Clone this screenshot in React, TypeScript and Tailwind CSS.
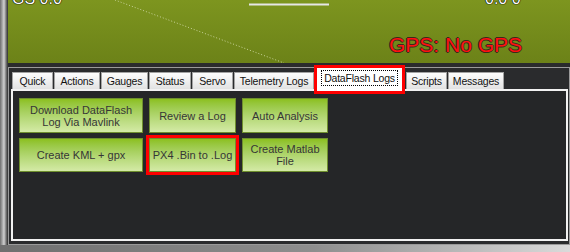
const tabs = [
  { label: "Quick", w: "w-[41px]" },
  { label: "Actions", w: "w-[46px]" },
  { label: "Gauges", w: "w-[47px]" },
  { label: "Status", w: "w-[42px]" },
  { label: "Servo", w: "w-[41px]" },
  { label: "Telemetry Logs", w: "w-[80px]" },
  { label: "DataFlash Logs", w: "w-[85px]", active: true },
  { label: "Scripts", w: "w-[41px]" },
  { label: "Messages", w: "w-[56px]" },
];

const buttons = [
  { label: "Download DataFlash Log Via Mavlink" },
  { label: "Review a Log" },
  { label: "Auto Analysis" },
  { label: "Create KML + gpx" },
  { label: "PX4 .Bin to .Log", marked: true },
  { label: "Create Matlab File" },
];

function Hud() {
  return (
    <div className="relative h-[63px] overflow-hidden bg-linear-to-b from-[#7d951f] to-[#6c8218]">
      <svg className="absolute inset-0" width="562" height="63">
        <line x1="107" y1="0" x2="276" y2="63" stroke="#c9d49a" strokeWidth="1" strokeDasharray="1 2" />
        <line x1="241" y1="4.5" x2="321" y2="4.5" stroke="#e6e6e6" strokeWidth="2" />
      </svg>
      <span className="absolute left-[4px] top-[-13px] text-[16px] text-white [text-shadow:0_0_1px_#000,0_0_1px_#000,0_0_1px_#000]">
        GS 0.0
      </span>
      <span className="absolute left-[477px] top-[-13px] text-[16px] text-white [text-shadow:0_0_1px_#000,0_0_1px_#000,0_0_1px_#000]">
        0.0 0
      </span>
      <span className="absolute left-[381px] top-[29px] text-[21px] text-[#ff1010] [text-shadow:1px_0_0_#3a2a1a,-1px_0_0_#3a2a1a,0_1px_0_#3a2a1a,0_-1px_0_#3a2a1a]">
        GPS: No GPS
      </span>
    </div>
  );
}

function Tab({ label, w, active }: { label: string; w: string; active?: boolean }) {
  if (active) {
    return (
      <div
        className={`${w} relative z-10 -mb-[2px] ml-[2px] mr-[3px] flex h-[23px] items-start justify-center bg-white pt-[2px] outline-[3px] outline-[#ff0000]`}
      >
        <span className="whitespace-nowrap border border-dotted border-black px-[2px] leading-[14px]">{label}</span>
      </div>
    );
  }
  return (
    <div
      className={`${w} flex h-[17px] items-center justify-center whitespace-nowrap border border-b-0 border-[#a3a3a3] bg-linear-to-b from-[#fdfdfd] to-[#e2e2e2] leading-[14px]`}
    >
      {label}
    </div>
  );
}

export default function App() {
  return (
    <div className="flex h-[252px] w-[570px] flex-col overflow-hidden bg-[#2a2b2d] font-['Liberation_Sans',Arial,sans-serif] text-[11px] text-[#111]">
      <div className="flex h-[245px]">
        <div className="w-[8px] bg-linear-to-r from-[#6e6e6e] via-[#d2d2d2] to-[#2e2e2e]" />
        <div className="flex flex-1 flex-col">
          <Hud />
          <div className="mt-[4px] flex flex-1 flex-col border border-[#9a9a9a] pb-[3px] pl-[2px] pr-[1px]">
            <div className="flex h-[21px] items-end gap-[1px] pl-[1px] text-[10.5px] tracking-[-0.2px]">
              {tabs.map((t) => (
                <Tab key={t.label} {...t} />
              ))}
            </div>
            <div className="flex-1 border-2 border-[#f2f2f2] bg-[#252628] pl-[6px] pt-[7px]">
              <div className="grid grid-cols-[124px_87px_86px] grid-rows-[35px_34px] gap-x-[6px] gap-y-[5px]">
                {buttons.map((b) => (
                  <div
                    key={b.label}
                    className={`flex items-center justify-center border border-[#6f8f2e] bg-linear-to-b from-[#8cc01c] to-[#d4eaa6] px-[3px] text-center leading-[12px] text-[#363636] ${
                      b.marked ? "whitespace-nowrap outline-[3px] outline-[#ff0000]" : ""
                    }`}
                  >
                    {b.label}
                  </div>
                ))}
              </div>
            </div>
          </div>
        </div>
      </div>
      <div className="h-[7px] bg-linear-to-r from-[#6f6f6f] via-[#8e8e8e] via-55% to-[#dadada]" />
    </div>
  );
}
